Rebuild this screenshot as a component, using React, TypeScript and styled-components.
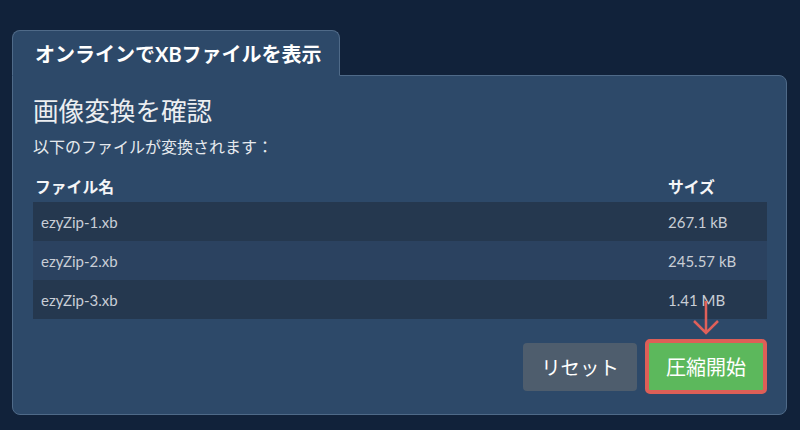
import React from "react";
import styled, { createGlobalStyle } from "styled-components";

const GlobalStyle = createGlobalStyle`
  html, body {
    margin: 0;
    padding: 0;
    background: #11223a;
    font-family: Lato, "Noto Sans CJK JP", "Noto Sans", sans-serif;
  }
`;

const Page = styled.div`
  padding: 30px 13px 15px 12px;
`;

const TabBar = styled.div`
  display: flex;
  margin-bottom: -1px;
  position: relative;
  z-index: 1;
`;

const Tab = styled.div`
  width: 328px;
  height: 46px;
  box-sizing: border-box;
  display: flex;
  align-items: center;
  padding-left: 22px;
  background: #2d4969;
  border: 1px solid #4f6a88;
  border-bottom: 1px solid #2d4969;
  border-radius: 8px 8px 0 0;
  color: #ffffff;
  font-size: 20px;
  font-weight: 700;
`;

const Panel = styled.div`
  background: #2d4969;
  border: 1px solid #4f6a88;
  border-radius: 0 8px 8px 8px;
  padding: 20px 19px 20px 20px;
`;

const Title = styled.h2`
  margin: 0;
  font-size: 25.6px;
  line-height: 30px;
  font-weight: 400;
  color: #eceef1;
`;

const Subtitle = styled.p`
  margin: 11px 0 0;
  font-size: 16px;
  line-height: 20px;
  color: #e6e9ee;
`;

const Table = styled.div`
  margin-top: 20px;
  display: grid;
  grid-template-columns: 635px 1fr;
`;

const HeadCell = styled.div<{ $first?: boolean }>`
  padding: 0 0 5px ${(p) => (p.$first ? "2px" : "0")};
  font-size: 15.8px;
  line-height: 20px;
  font-weight: 700;
  color: #f4f5f7;
`;

const Cell = styled.div<{ $odd: boolean; $first?: boolean }>`
  height: 39px;
  display: flex;
  align-items: center;
  padding-left: ${(p) => (p.$first ? "8px" : "0")};
  background: ${(p) => (p.$odd ? "#25384f" : "#2b4260")};
  font-size: 15px;
  color: #c9ced6;
`;

const Actions = styled.div`
  margin-top: 20px;
  display: flex;
  justify-content: flex-end;
  align-items: center;
  gap: 8px;
`;

const ResetButton = styled.button`
  width: 114px;
  height: 48px;
  border: none;
  border-radius: 4px;
  background: #4e5d6d;
  color: #ffffff;
  font-family: inherit;
  font-size: 19.4px;
  cursor: pointer;
`;

const StartWrap = styled.div`
  position: relative;
`;

const StartButton = styled.button`
  width: 122px;
  height: 55px;
  box-sizing: border-box;
  border: 4px solid #dd5f57;
  border-radius: 5px;
  background: #5cb85c;
  color: #ffffff;
  font-family: inherit;
  font-size: 20px;
  cursor: pointer;
`;

const Arrow = styled.svg`
  position: absolute;
  left: 45px;
  top: -40px;
  pointer-events: none;
`;

const files = [
  { name: "ezyZip-1.xb", size: "267.1 kB" },
  { name: "ezyZip-2.xb", size: "245.57 kB" },
  { name: "ezyZip-3.xb", size: "1.41 MB" },
];

export default function App() {
  return (
    <Page>
      <GlobalStyle />
      <TabBar>
        <Tab>オンラインでXBファイルを表示</Tab>
      </TabBar>
      <Panel>
        <Title>画像変換を確認</Title>
        <Subtitle>以下のファイルが変換されます：</Subtitle>
        <Table>
          <HeadCell $first>ファイル名</HeadCell>
          <HeadCell>サイズ</HeadCell>
          {files.map((f, i) => (
            <React.Fragment key={f.name}>
              <Cell $odd={i % 2 === 0} $first>
                {f.name}
              </Cell>
              <Cell $odd={i % 2 === 0}>{f.size}</Cell>
            </React.Fragment>
          ))}
        </Table>
        <Actions>
          <ResetButton>リセット</ResetButton>
          <StartWrap>
            <Arrow width="32" height="38" viewBox="0 0 32 38">
              <path
                d="M16 2 L16 34 M4 22 L16 34 L28 22"
                fill="none"
                stroke="#e0605a"
                strokeWidth="2.5"
              />
            </Arrow>
            <StartButton>圧縮開始</StartButton>
          </StartWrap>
        </Actions>
      </Panel>
    </Page>
  );
}
